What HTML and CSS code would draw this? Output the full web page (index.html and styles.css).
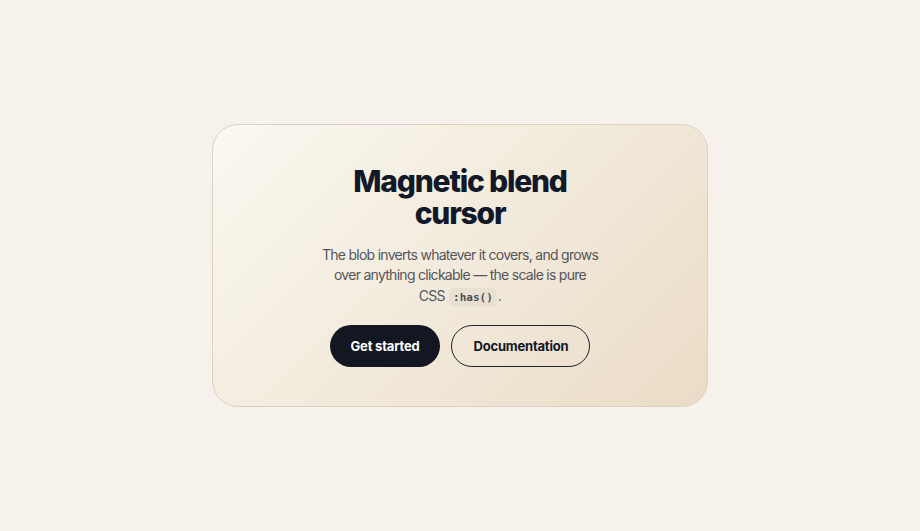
FILE: index.html
```html
<!DOCTYPE html>
<html lang="en">
<head>
<meta charset="utf-8">
<title>Magnetic blend cursor</title>
<link rel="stylesheet" href="styles.css">
</head>
<body>
<main class="stage">
  <section class="card">
    <h1 class="title">Magnetic blend<br>cursor</h1>
    <p class="lead">The blob inverts whatever it covers, and grows over anything clickable — the scale is pure CSS <code class="code">:has()</code>.</p>
    <div class="actions">
      <a class="btn btn-primary" href="#">Get started</a>
      <a class="btn btn-outline" href="#">Documentation</a>
    </div>
  </section>
</main>
</body>
</html>
```
FILE: styles.css
```css
* { box-sizing: border-box; }
html, body { margin: 0; height: 100%; }
body {
  background: #f6f2eb;
  font-family: Inter, "Noto Sans", sans-serif;
  color: #111827;
}
.stage {
  height: 100%;
  display: flex;
  align-items: center;
  justify-content: center;
}
.card {
  width: 496px;
  padding: 40px 40px 39px;
  border: 1px solid #dcd2c2;
  border-radius: 26px;
  background: linear-gradient(135deg, #faf8f0 0%, #f2eadc 50%, #eadcc6 100%);
  display: flex;
  flex-direction: column;
  align-items: center;
  text-align: center;
}
.title {
  margin: 0;
  font-size: 30px;
  line-height: 32px;
  font-weight: 800;
  letter-spacing: -1.2px;
  color: #111827;
}
.lead {
  margin: 16px 0 0;
  max-width: 277px;
  font-size: 14px;
  line-height: 20.5px;
  letter-spacing: -0.72px;
  color: #56565a;
}
.code {
  font-family: "DejaVu Sans Mono", monospace;
  font-weight: bold;
  font-size: 11px;
  letter-spacing: 0;
  background: #e8e0d2;
  color: #505052;
  padding: 3px 4px;
  border-radius: 6px;
  margin: 0 1px;
}
.actions {
  margin-top: 17px;
  display: flex;
  gap: 11px;
}
.btn {
  display: inline-flex;
  align-items: center;
  justify-content: center;
  height: 42px;
  padding: 0 21px;
  border-radius: 21px;
  font-size: 13px;
  letter-spacing: -0.2px;
  font-weight: 700;
  text-decoration: none;
}
.btn-primary {
  background: #121722;
  color: #fff;
}
.btn-outline {
  border: 1px solid #1f2430;
  color: #111827;
  background: transparent;
}
```
